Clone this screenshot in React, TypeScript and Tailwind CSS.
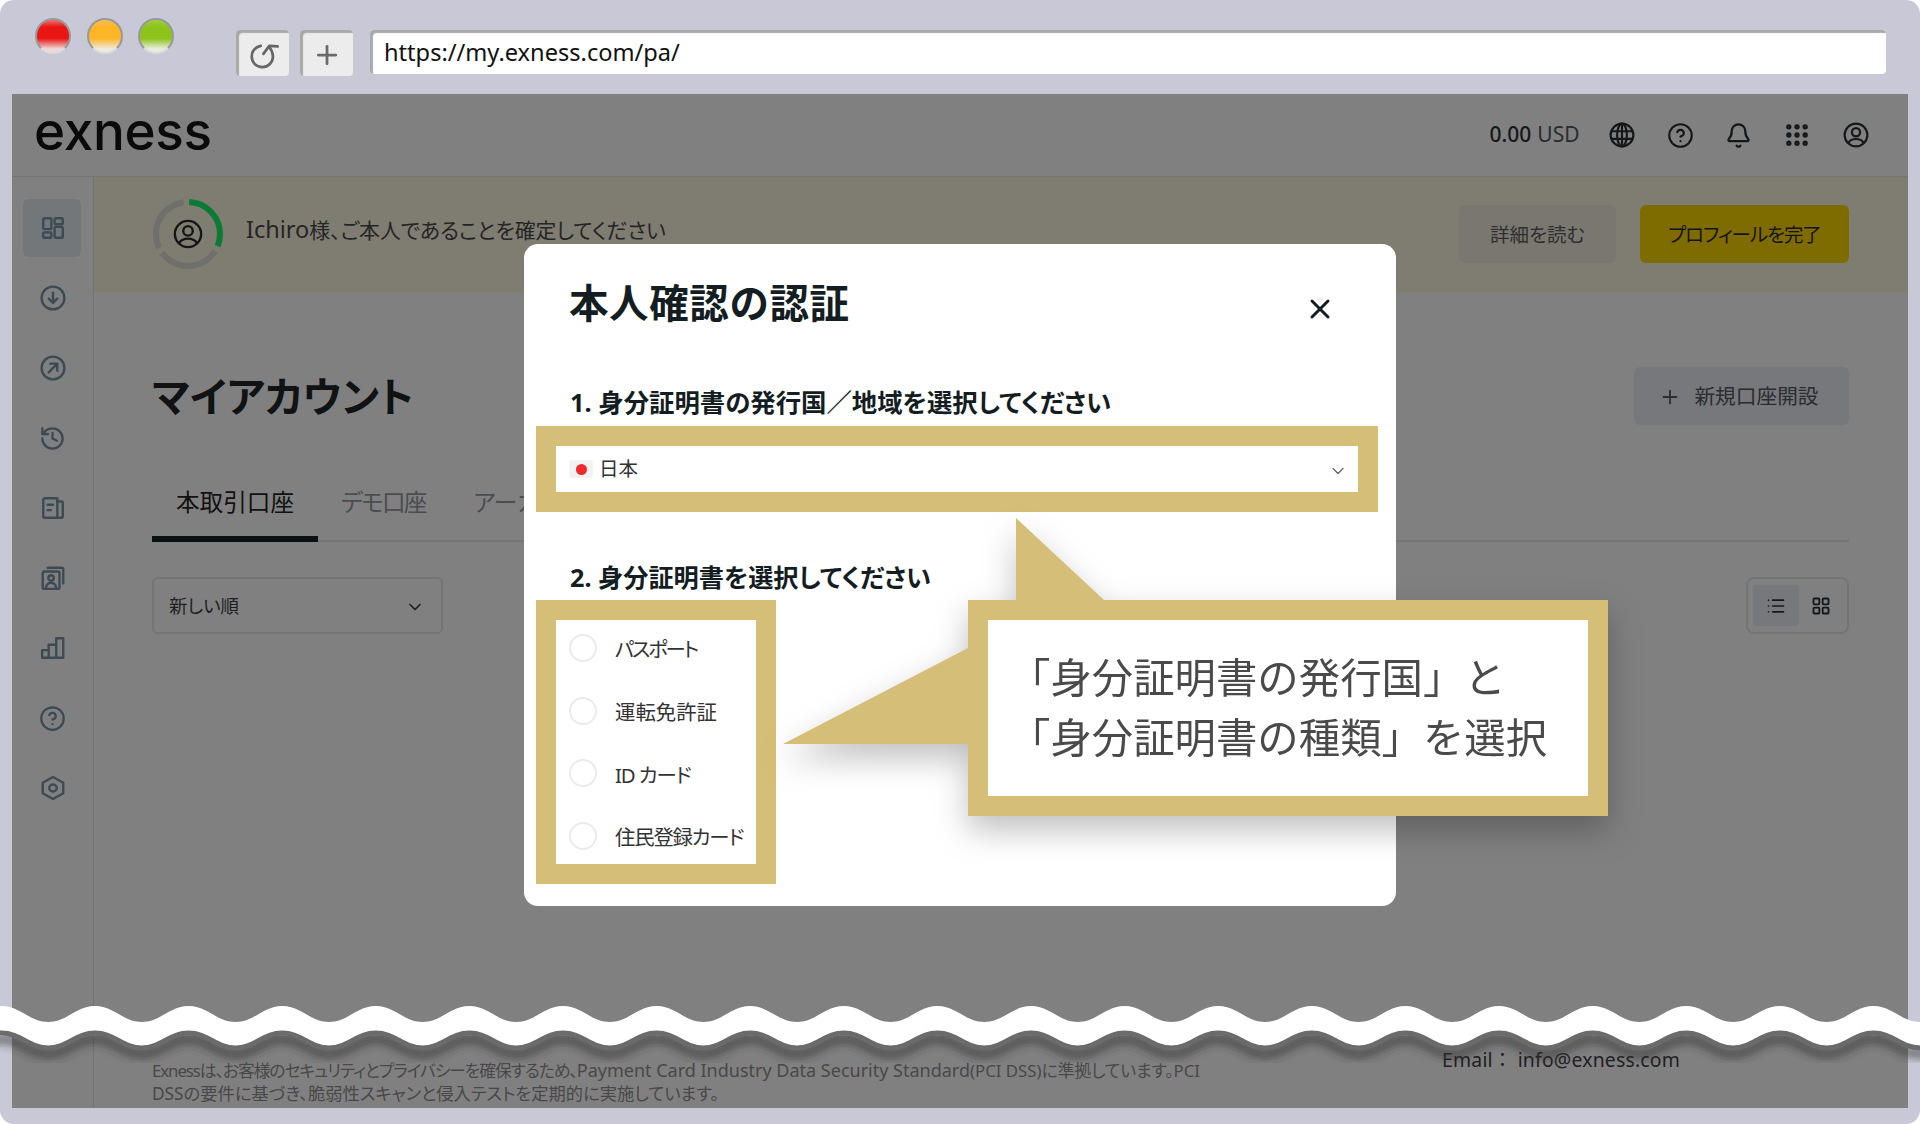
import React from "react";
import { ChevronDown, Plus, X, Bell, Grip, List, LayoutGrid, History, CircleHelp } from "lucide-react";

const waveTop = (() => {
  const p = 93.6;
  const mk = (mid: number, amp: number) => {
    let x = 95 - p * 2;
    const end = 2020;
    let up = true;
    let s = `M${x} ${mid - amp}`;
    while (x < end) {
      const nx = x + p / 2;
      const y0 = up ? mid - amp : mid + amp;
      const y1 = up ? mid + amp : mid - amp;
      s += ` C${x + 19} ${y0} ${nx - 19} ${y1} ${nx} ${y1}`;
      x = nx;
      up = !up;
    }
    return { d: s, endX: x };
  };
  const top = mk(32, 8);
  const bot = mk(56.5, 7.5);
  return { top: top.d, bottom: bot.d, endX: top.endX };
})();

const sansJp = "font-['Noto_Sans','Noto_Sans_CJK_JP',sans-serif]";
const palt = "[font-feature-settings:'palt']";

function Dashboard() {
  return (
    <svg width="26" height="26" viewBox="0 0 24 24" fill="none" stroke="currentColor" strokeWidth="2.2">
      <rect x="3" y="3" width="7.5" height="10" rx="1" />
      <rect x="13.5" y="3" width="7.5" height="5.5" rx="1" />
      <rect x="3" y="16" width="7.5" height="5" rx="1" />
      <rect x="13.5" y="11" width="7.5" height="10" rx="1" />
    </svg>
  );
}
function ArrowDownCircle() {
  return (
    <svg width="26" height="26" viewBox="0 0 24 24" fill="none" stroke="currentColor" strokeWidth="2.2" strokeLinecap="round" strokeLinejoin="round">
      <circle cx="12" cy="12" r="10.5" />
      <path d="M12 7v9M8 12.5l4 4 4-4" />
    </svg>
  );
}
function ArrowUpCircle() {
  return (
    <svg width="26" height="26" viewBox="0 0 24 24" fill="none" stroke="currentColor" strokeWidth="2.2" strokeLinecap="round" strokeLinejoin="round">
      <circle cx="12" cy="12" r="10.5" />
      <path d="M8 16l7.5-7.5M9.5 8h6.5v6.5" />
    </svg>
  );
}
function NewsIcon() {
  return (
    <svg width="26" height="26" viewBox="0 0 24 24" fill="none" stroke="currentColor" strokeWidth="2.2" strokeLinecap="round" strokeLinejoin="round">
      <path d="M3 4.5A1.5 1.5 0 0 1 4.5 3H16v18H4.5A1.5 1.5 0 0 1 3 19.500z" />
      <path d="M16 6h4a1 1 0 0 1 1 1v13a1 1 0 0 1-1 1h-4" />
      <path d="M7 9h5M7 14h3" />
    </svg>
  );
}
function ContactsIcon() {
  return (
    <svg width="26" height="26" viewBox="0 0 24 24" fill="none" stroke="currentColor" strokeWidth="2.2" strokeLinecap="round" strokeLinejoin="round">
      <rect x="2.500" y="6" width="15.500" height="16" rx="1.500" />
      <circle cx="10.200" cy="12" r="2.500" />
      <path d="M5.500 21c.5-3 2.500-4.500 4.700-4.500S14.500 18 15 21" />
      <path d="M7 2.500h13a1.500 1.500 0 0 1 1.500 1.500v13" />
    </svg>
  );
}
function BarsIcon() {
  return (
    <svg width="26" height="26" viewBox="0 0 24 24" fill="none" stroke="currentColor" strokeWidth="2.2" strokeLinejoin="round">
      <path d="M2 14h6v7H2zM8 9h7v12H8zM15 3h6.500v18H15z" />
    </svg>
  );
}
function HexIcon() {
  return (
    <svg width="26" height="26" viewBox="0 0 24 24" fill="none" stroke="currentColor" strokeWidth="2.2" strokeLinejoin="round">
      <path d="M12 1.800l9.500 5.300v9.800L12 22.200l-9.500-5.300V7.100z" />
      <ellipse cx="12" cy="12" rx="3.500" ry="3.200" />
    </svg>
  );
}
function GlobeIcon() {
  return (
    <svg width="26" height="26" viewBox="0 0 24 24" fill="none" stroke="currentColor" strokeWidth="2">
      <circle cx="12" cy="12" r="10.500" />
      <ellipse cx="12" cy="12" rx="4.500" ry="10.500" />
      <path d="M12 1.500v21M2 8.500h20M2 15.500h20" />
    </svg>
  );
}
function UserCircle({ size = 26, sw = 2 }: { size?: number; sw?: number }) {
  return (
    <svg width={size} height={size} viewBox="0 0 24 24" fill="none" stroke="currentColor" strokeWidth={sw}>
      <circle cx="12" cy="12" r="10.500" />
      <circle cx="12" cy="9.500" r="3.800" />
      <path d="M5 19c1.500-2.200 4-3.300 7-3.300s5.500 1.100 7 3.300" />
    </svg>
  );
}
function Light({ cls }: { cls: string }) {
  return <span className={`block w-[36px] h-[36px] rounded-full border-[2.500px] border-[#999] border-b-[#dcdcdc] ${cls}`} />;
}

function Ring() {
  const c = 2 * Math.PI * 32;
  const seg = (a: number, b: number) => `${((b - a) / 360) * c} ${c}`;
  const rot = (a: number) => `rotate(${a - 90} 36 36)`;
  return (
    <div className="relative w-[72px] h-[72px] flex items-center justify-center text-[#151515]">
      <svg width="72" height="72" viewBox="0 0 72 72" fill="none" strokeWidth="6" className="absolute left-0 top-0">
        <circle cx="36" cy="36" r="32" stroke="#6f6f6b" strokeDasharray={seg(0, 112)} transform={rot(122)} />
        <circle cx="36" cy="36" r="32" stroke="#6f6f6b" strokeDasharray={seg(0, 108)} transform={rot(244)} />
        <circle cx="36" cy="36" r="32" stroke="#0b7a35" strokeDasharray={seg(0, 110)} transform={rot(2)} />
      </svg>
      <UserCircle size={30} sw={1.900} />
    </div>
  );
}

const navIcons = [Dashboard, ArrowDownCircle, ArrowUpCircle, () => <History size={27} strokeWidth={2.100} />, NewsIcon, ContactsIcon, BarsIcon, () => <CircleHelp size={27} strokeWidth={2} />, HexIcon];

function Radio({ label, cls }: { label: string; cls: string }) {
  return (
    <div className="flex items-center h-[56px] pl-[13px] gap-[18px]">
      <span className="block w-[28px] h-[28px] rounded-full border-2 border-[#ebebeb] shrink-0" />
      <span className={`text-[20.400px] text-[#333] whitespace-nowrap pt-[3px] ${palt} ${cls}`}>{label}</span>
    </div>
  );
}

export default function App() {
  return (
    <div className={`relative w-[1920px] h-[1124px] bg-white overflow-hidden ${sansJp}`}>
      <div className="w-full h-full bg-[#c8c8d6] rounded-[14px] flex flex-col">
        {/* browser toolbar */}
        <div className="h-[94px] shrink-0 flex items-start">
          <div className="flex gap-[15.500px] ml-[35px] mt-[18px]">
            <Light cls="bg-[linear-gradient(180deg,#ee7070_0%,#ea1616_22%,#ea1616_58%,#eed8d8_90%)]" />
            <Light cls="bg-[linear-gradient(180deg,#f8c050_0%,#fbb527_22%,#fbb527_58%,#f0eae0_90%)]" />
            <Light cls="bg-[linear-gradient(180deg,#a0cc40_0%,#8dc41c_22%,#8dc41c_58%,#e8eee0_90%)]" />
          </div>
          <div className="flex gap-[11px] ml-[62px] mt-[30px]">
            <div className="w-[53px] h-[46px] rounded-[4px] bg-[#ececec] shadow-[inset_3px_3px_1px_#a9a9a9] flex items-center justify-center pt-[5px] pl-[5px]">
              <svg width="34" height="30" viewBox="0 0 32 28" fill="none" stroke="#666" strokeWidth="2.500" strokeLinecap="round" strokeLinejoin="round">
                <path d="M12 4.500C6.500 6 3.500 9.800 3.500 14.500c0 5.600 4.500 10 10 10s10-4.500 10-10c0-3.500-1.500-6.500-3.500-9" />
                <path d="M14.500 12l5.500-7.500 8 .5" />
              </svg>
            </div>
            <div className="w-[53px] h-[46px] rounded-[4px] bg-[#ececec] shadow-[inset_3px_3px_1px_#a9a9a9] flex items-center justify-center pt-[3px]">
              <Plus size={30} strokeWidth={2.200} color="#6a6a6a" />
            </div>
          </div>
          <div className="ml-[17px] mt-[30px] w-[1516px] h-[44px] rounded-[4px] bg-white shadow-[inset_3px_3px_1px_#a9a9a9] flex items-center pl-[14px] pt-[2px]">
            <span className="text-[23.600px] text-[#111]">https://my.exness.com/pa/</span>
          </div>
        </div>

        {/* dimmed page */}
        <div className="mx-[12px] h-[1014px] bg-[#808080] flex flex-col shrink-0">
          <header className="h-[83px] shrink-0 border-b border-[#737476] flex items-center justify-between pl-[22px] pr-[23px]">
            <span className="font-['Inter',sans-serif] font-medium text-[53px] leading-none tracking-[-0.3px] text-[#0a0a0a] pb-[7px]">exness</span>
            <div className="flex items-center text-[#151719]">
              <span className="text-[21px] mr-[13px] flex items-center gap-[6px]">
                <span className="font-medium">0.00</span>
                <span className="text-[#2a2c2e]">USD</span>
              </span>
              <div className="flex items-center">
                <div className="w-[58.500px] flex justify-center"><GlobeIcon /></div>
                <div className="w-[58.500px] flex justify-center"><CircleHelp size={27} strokeWidth={1.900} /></div>
                <div className="w-[58.500px] flex justify-center"><Bell size={27} strokeWidth={2} /></div>
                <div className="w-[58.500px] flex justify-center"><Grip size={28} strokeWidth={2.600} /></div>
                <div className="w-[58.500px] flex justify-center"><UserCircle /></div>
              </div>
            </div>
          </header>

          <div className="flex-1 flex min-h-0">
            <aside className="w-[82px] shrink-0 border-r border-[#727476] pt-[22px] flex flex-col text-[#3c4a54] pl-[11px]">
              {navIcons.map((Ic, i) => (
                <div key={i} className={`w-[58px] h-[58px] mb-[12px] rounded-[6px] flex items-center justify-center pl-[1px] ${i === 0 ? "bg-[#74777a]" : ""}`}>
                  <Ic />
                </div>
              ))}
            </aside>
            <main className="flex-1 flex flex-col min-w-0">
              <div className="h-[116px] shrink-0 bg-[#7f7c72] border-b border-[#85816f] flex items-center pl-[58px] pr-[59px] pb-[1px]">
                <Ring />
                <span className={`ml-[22px] text-[20.900px] text-[#252525] pb-[8px] ${palt}`}><span className="text-[23.500px]">Ichiro</span>様、ご本人であることを確定してください</span>
                <div className="ml-auto flex gap-[24px]">
                  <div className={`w-[157px] h-[58px] rounded-[6px] bg-[#79776f] flex items-center justify-center pt-[2px] text-[19.500px] text-[#2f2f2f] ${palt}`}>詳細を読む</div>
                  <div className={`w-[209px] h-[58px] rounded-[6px] bg-[#7f6c00] flex items-center justify-center pt-[2px] text-[19.500px] tracking-[-1.100px] text-[#141414] ${palt}`}>プロフィールを完了</div>
                </div>
              </div>
              <div className="flex-1 flex flex-col pl-[58px] pr-[59px] pt-[74px] min-h-0">
                <div className="flex items-center justify-between h-[58px]">
                  <h1 className={`text-[41px] font-bold text-[#101214] leading-none ${palt}`}>マイアカウント</h1>
                  <div className={`w-[215px] h-[58px] rounded-[6px] bg-[#76787c] flex items-center justify-center gap-[13px] pr-[5px] pt-[2px] text-[20.700px] text-[#2a2c2e] ${palt}`}>
                    <Plus size={22} strokeWidth={2} />
                    新規口座開設
                  </div>
                </div>
                <div className={`mt-[53px] h-[64px] border-b-2 border-[#747576] flex items-start ${palt}`}>
                  <div className="w-[166px] h-[64px] shrink-0 border-b-[6px] border-[#0a1114] flex items-center justify-center text-[23.600px] text-[#111] pb-[8px]">本取引口座</div>
                  <div className="ml-[23px] h-[64px] flex items-center text-[23.600px] tracking-[-1.800px] text-[#4b4d4f] pb-[14px]">デモ口座</div>
                  <div className="ml-[48px] h-[64px] flex items-center text-[23.600px] text-[#4b4d4f] pb-[14px]">アーカイブ</div>
                </div>
                <div className="mt-[35px] flex items-center justify-between">
                  <div className={`w-[291px] h-[57px] rounded-[6px] border-2 border-[#727476] flex items-center justify-between pl-[15px] pr-[17px] text-[18.500px] text-[#1d1f21] ${palt}`}>
                    <span className="pt-[1px]">新しい順</span>
                    <ChevronDown size={20} strokeWidth={2} className="mt-[2px] -mr-[1px]" />
                  </div>
                  <div className="w-[103px] h-[57px] rounded-[8px] border-2 border-[#727476] flex items-center pl-[5px] text-[#15181a]">
                    <div className="w-[46px] h-[41px] rounded-[4px] bg-[#76787b] flex items-center justify-center"><List size={20} strokeWidth={2} /></div>
                    <div className="w-[44px] flex items-center justify-center"><LayoutGrid size={20} strokeWidth={2.200} /></div>
                  </div>
                </div>
                <footer className="mt-auto pb-[3px] flex items-start justify-between">
                  <p className={`text-[16.800px] leading-[23px] text-[#484848] whitespace-nowrap ${palt}`}>
                    <span className="tracking-[-1.050px]">Exnessは、お客様のセキュリティとプライバシーを確保するため、</span><span className="text-[18px]">Payment Card Industry Data Security Standard</span>(PCI DSS)に準拠しています。PCI<br />
                    <span className="text-[17.300px]">DSSの要件に基づき、脆弱性スキャンと侵入テストを定期的に実施しています。</span>
                  </p>
                  <p className="w-[407px] text-[19.400px] text-[#1f1f1f] -mt-[14px] tracking-[0.2px]">Email：&nbsp;info@exness.com</p>
                </footer>
              </div>
            </main>
          </div>
        </div>
      </div>

      {/* torn-edge wave */}
      <svg className="absolute left-0 top-[982px]" width="1920" height="100" viewBox="0 0 1920 100" fill="none">
        <defs>
          <filter id="wshadow" x="-5%" y="-20%" width="110%" height="180%">
            <feGaussianBlur stdDeviation="5" />
          </filter>
          <clipPath id="wclip">
            <path d={`${waveTop.bottom} L2100 -100 L-200 -100 Z`} />
          </clipPath>
        </defs>
        <path d={waveTop.bottom} transform="translate(0 8)" stroke="#2c2c2c" strokeOpacity="0.75" strokeWidth="7" filter="url(#wshadow)" />
        <path d={`${waveTop.top} L${waveTop.endX} 100 L-100 100 Z`} fill="white" clipPath="url(#wclip)" />
        <path d={waveTop.bottom} stroke="#6b6b6b" strokeWidth="5" transform="translate(0 2)" />
      </svg>

      {/* modal */}
      <div className="absolute left-[524px] top-[244px] w-[872px] h-[662px] bg-white rounded-[14px] flex flex-col">
        <div className="h-[118px] shrink-0 flex items-center justify-between pl-[45px] pr-[60px]">
          <h2 className="text-[39.500px] font-bold text-[#141d22] leading-none tracking-[0.6px] pt-[2px]">本人確認の認証</h2>
          <X size={32} strokeWidth={2.200} className="text-[#141d22] mt-[12px]" />
        </div>
        <div className={`h-[64px] shrink-0 pl-[46px] pt-[22.500px] text-[25.400px] leading-[34px] font-bold text-[#141d22] whitespace-nowrap ${palt}`}>1. 身分証明書の発行国／地域を選択してください</div>
        <div className="ml-[12px] w-[842px] h-[86px] shrink-0 bg-[#d5bf78] p-[20px]">
          <div className="h-[46px] bg-white flex items-center pl-[14px] pr-[10px]">
            <span className="w-[22px] h-[16px] bg-[#f2f2f2] flex items-center justify-center shrink-0 shadow-[0_0_1px_#bbb]">
              <span className="block w-[11px] h-[11px] rounded-full bg-[#f0272b]" />
            </span>
            <span className="ml-[7px] text-[19.500px] text-[#333]">日本</span>
            <ChevronDown size={20} strokeWidth={1.500} className="ml-auto mt-[3px] text-[#666]" />
          </div>
        </div>
        <div className={`h-[88px] shrink-0 pl-[46px] pt-[47.500px] text-[25.200px] leading-[34px] font-bold text-[#141d22] whitespace-nowrap ${palt}`}>2. 身分証明書を選択してください</div>
        <div className="ml-[12px] w-[240px] h-[284px] shrink-0 bg-[#d5bf78] p-[20px]">
          <div className="h-full bg-white flex flex-col gap-[6.700px]">
            <Radio label="パスポート" cls="tracking-[-2.200px]" />
            <Radio label="運転免許証" cls="" />
            <Radio label="ID カード" cls="tracking-[-1.100px]" />
            <Radio label="住民登録カード" cls="tracking-[-1.200px]" />
          </div>
        </div>
      </div>

      {/* callout */}
      <div className="absolute left-[783px] top-[518px] w-[825px] h-[298px] drop-shadow-[0_14px_16px_rgba(0,0,0,0.25)]">
        <svg className="absolute left-0 top-0" width="825" height="298" viewBox="0 0 825 298">
          <polygon points="233,0 321,82 233,82" fill="#d5bf78" />
          <polygon points="0,226 185,130 185,226" fill="#d5bf78" />
        </svg>
        <div className="absolute left-[185px] top-[82px] w-[640px] h-[216px] bg-[#d5bf78] p-[20px]">
          <div className="w-full h-full bg-white pl-[21px] pt-[27px] text-[41.400px] leading-[60px] text-[#4a4a4a] whitespace-nowrap">
            「身分証明書の発行国」と<br />「身分証明書の種類」を選択
          </div>
        </div>
      </div>
    </div>
  );
}
